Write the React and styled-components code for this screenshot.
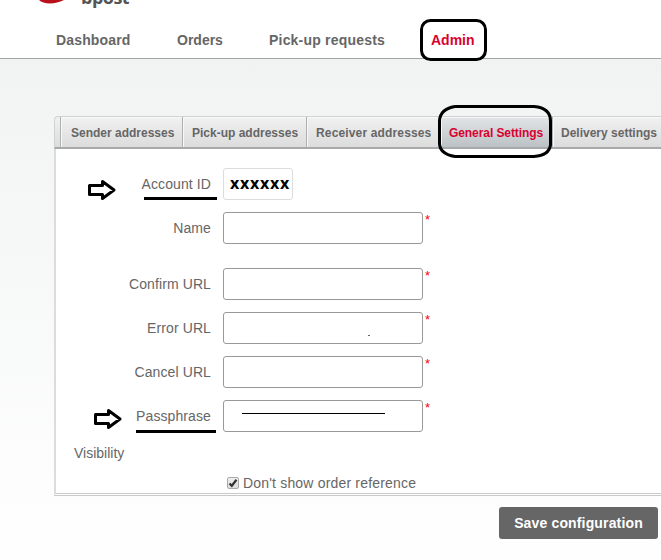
import { styled, createGlobalStyle } from "styled-components";

const GlobalStyle = createGlobalStyle`
  * {
    box-sizing: border-box;
  }
  body {
    margin: 0;
    background: #fff;
    font-family: "Liberation Sans", Arial, sans-serif;
    color: #666;
  }
`;

const Page = styled.div`
  width: 661px;
  height: 560px;
  overflow: hidden;
  background: linear-gradient(#f1f2f2 58px, #f4f5f5 150px, #fefefe 520px);
`;

const Header = styled.header`
  height: 59px;
  background: #fff;
  border-bottom: 1px solid #a3a3a3;
`;

const Brand = styled.div`
  display: flex;
  gap: 16px;
  height: 30px;
  padding-left: 38px;
`;

const BrandName = styled.span`
  height: 12px;
  margin-top: -12px;
  font: bold 18px/18px "Open Sans", sans-serif;
  letter-spacing: -0.5px;
  color: #555;
`;

const Nav = styled.nav`
  display: flex;
  padding-left: 56px;
`;

const NavItem = styled.a`
  position: relative;
  width: ${({ $width }) => $width}px;
  font-size: 14px;
  font-weight: bold;
  line-height: 20px;
  letter-spacing: ${({ $spacing }) => $spacing || 0}px;
  white-space: nowrap;
  color: ${({ $active }) => ($active ? "#d9002f" : "#666")};
`;

/* hand drawn frame around the active item */
const Frame = styled.svg`
  position: absolute;
  left: ${({ $left }) => $left}px;
  top: ${({ $top }) => $top}px;
  overflow: visible;
  z-index: 1;
`;

const Content = styled.main`
  width: 661px;
  padding: 57px 0 0 54px;
`;

const TabBar = styled.div`
  display: flex;
  height: 33px;
  padding-left: 5px;
  border: solid #d0d1d2;
  border-width: 1px 0 0 1px;
  border-bottom: 2px solid #a8a9ab;
  border-top-left-radius: 4px;
  background: linear-gradient(#f1f1f1, #dcdcdc);
`;

const Tab = styled.a`
  position: relative;
  flex: none;
  width: ${({ $width }) => $width}px;
  padding-left: ${({ $pad }) => $pad || 9}px;
  border-left: 1px solid #aeafb1;
  box-shadow: inset 1px 0 #f8f8f8, inset 0 1px #f8f8f8;
  background: ${({ $active }) =>
    $active ? "linear-gradient(#e1e5e8, #bcc1c5)" : "none"};
  color: ${({ $active }) => ($active ? "#d9002f" : "#666")};
  font-size: 12px;
  font-weight: bold;
  line-height: 32px;
  letter-spacing: ${({ $spacing }) => $spacing || 0}px;
  white-space: nowrap;
`;

const Panel = styled.section`
  height: 347px;
  padding-top: 19px;
  background: #fff;
  border-left: 2px solid #dcdcdc;
  border-bottom: 3px double #c9c9c9;
`;

const Row = styled.div`
  display: flex;
  align-items: flex-start;
  height: 32px;
  margin-bottom: ${({ $gap }) => $gap || 12}px;
`;

const Label = styled.label`
  position: relative;
  width: 155px;
  margin-right: 12px;
  font-size: 14px;
  line-height: 32px;
  text-align: right;
  letter-spacing: 0.1px;
`;

const Underline = styled.span`
  position: absolute;
  left: ${({ $left }) => $left}px;
  top: ${({ $top }) => $top}px;
  width: ${({ $width }) => $width}px;
  height: 3px;
  background: #000;
`;

const Arrow = styled.svg`
  position: absolute;
  left: ${({ $left }) => $left}px;
  top: ${({ $top }) => $top}px;
`;

const AccountId = styled.div`
  width: 70px;
  height: 32px;
  padding-left: 6px;
  border: 1px solid #dcdcdc;
  border-radius: 3px;
  font: bold 16px/29px "Open Sans", sans-serif;
  letter-spacing: 0.75px;
  color: #000;
`;

const Field = styled.div`
  display: flex;
  align-items: center;
  width: 200px;
  height: 32px;
  border: 1px solid #999;
  border-radius: 3px;
  background: #fff;
`;

const Strike = styled.span`
  width: 143px;
  height: 1px;
  margin: 0 0 6px 18px;
  background: #000;
`;

const Dot = styled.span`
  width: 2px;
  height: 1px;
  margin: 15px 0 0 144px;
  background: #666;
`;

const Required = styled.span`
  margin-left: 2px;
  font-size: 13px;
  line-height: 16px;
  color: #f00;
`;

const Visibility = styled.div`
  padding-left: 18px;
  font-size: 14px;
  line-height: 18px;
`;

const Option = styled.label`
  display: flex;
  align-items: center;
  gap: 4px;
  margin: 12px 0 0 171px;
  font-size: 14px;
  line-height: 18px;
  letter-spacing: 0.18px;
`;

const Check = styled.span`
  display: flex;
  width: 12px;
  height: 12px;
  border: 1px solid #aaa;
  border-radius: 2px;
  background: linear-gradient(#eee, #ddd);
`;

const SaveButton = styled.button`
  display: block;
  width: 159px;
  height: 32px;
  margin: 11px 0 0 445px;
  padding: 0;
  border: 0;
  border-radius: 3px;
  background: #666;
  color: #fff;
  font: bold 14px/32px "Liberation Sans", Arial, sans-serif;
  letter-spacing: 0.15px;
`;

const PointArrow = ({ left, top }) => (
  <Arrow $left={left} $top={top} width="30" height="22" viewBox="0 0 30 22">
    <path
      d="M2.5 6.5H15.5V2.5L27 11L15.5 19.5V15.5H2.5Z"
      fill="none"
      stroke="#000"
      strokeWidth="3"
      strokeLinejoin="round"
    />
  </Arrow>
);

const TextRow = ({ label, gap, mark, children }) => (
  <Row $gap={gap}>
    <Label>
      {mark}
      {label}
    </Label>
    <Field>{children}</Field>
    <Required>*</Required>
  </Row>
);

export default function App() {
  return (
    <>
      <GlobalStyle />
      <Page>
        <Header>
          <Brand>
            <svg width="27" height="5" viewBox="0 0 27 5">
              <path d="M1 0H26C21 2 17 3.5 12 3.5C7 3.5 3 2 1 0Z" fill="#b9101c" />
            </svg>
            <BrandName>bpost</BrandName>
          </Brand>
          <Nav>
            <NavItem $width={121} $spacing={0.15}>Dashboard</NavItem>
            <NavItem $width={92}>Orders</NavItem>
            <NavItem $width={162} $spacing={0.2}>Pick-up requests</NavItem>
            <NavItem $width={44} $active>
              Admin
              <Frame $left={-11} $top={-11} width="67" height="42">
                <rect x="1.5" y="1.5" width="64" height="39" rx="9" fill="none" stroke="#000" strokeWidth="3" />
              </Frame>
            </NavItem>
          </Nav>
        </Header>
        <Content>
          <TabBar>
            <Tab $width={122} $pad={10}>Sender addresses</Tab>
            <Tab $width={124}>Pick-up addresses</Tab>
            <Tab $width={134} $spacing={0.15}>Receiver addresses</Tab>
            <Tab $width={112} $pad={8} $spacing={-0.08} $active>
              General Settings
              <Frame $left={-3} $top={-12} width="114" height="53">
                <path
                  d="M17 1.5H96Q112.5 3 112.5 16V40Q111 50.5 96 51.5H17Q1.5 49 1.5 38V16Q2 4 17 1.5Z"
                  fill="none"
                  stroke="#000"
                  strokeWidth="3"
                />
              </Frame>
            </Tab>
            <Tab $width={130} $pad={8}>Delivery settings</Tab>
          </TabBar>
          <Panel>
            <Row>
              <Label>
                <PointArrow left={31} top={11} />
                Account ID
                <Underline $left={88} $top={29} $width={73} />
              </Label>
              <AccountId>xxxxxx</AccountId>
            </Row>
            <TextRow label="Name" gap={24} />
            <TextRow label="Confirm URL" />
            <TextRow label="Error URL">
              <Dot />
            </TextRow>
            <TextRow label="Cancel URL" />
            <TextRow
              label="Passphrase"
              mark={
                <>
                  <PointArrow left={37} top={8} />
                  <Underline $left={80} $top={30} $width={80} />
                </>
              }
            >
              <Strike />
            </TextRow>
            <Visibility>Visibility</Visibility>
            <Option>
              <Check>
                <svg width="10" height="10" viewBox="0 0 10 10">
                  <path d="M1.5 5.5L3.8 7.8L8.5 1.8" fill="none" stroke="#333" strokeWidth="2.2" />
                </svg>
              </Check>
              Don't show order reference
            </Option>
          </Panel>
          <SaveButton>Save configuration</SaveButton>
        </Content>
      </Page>
    </>
  );
}
